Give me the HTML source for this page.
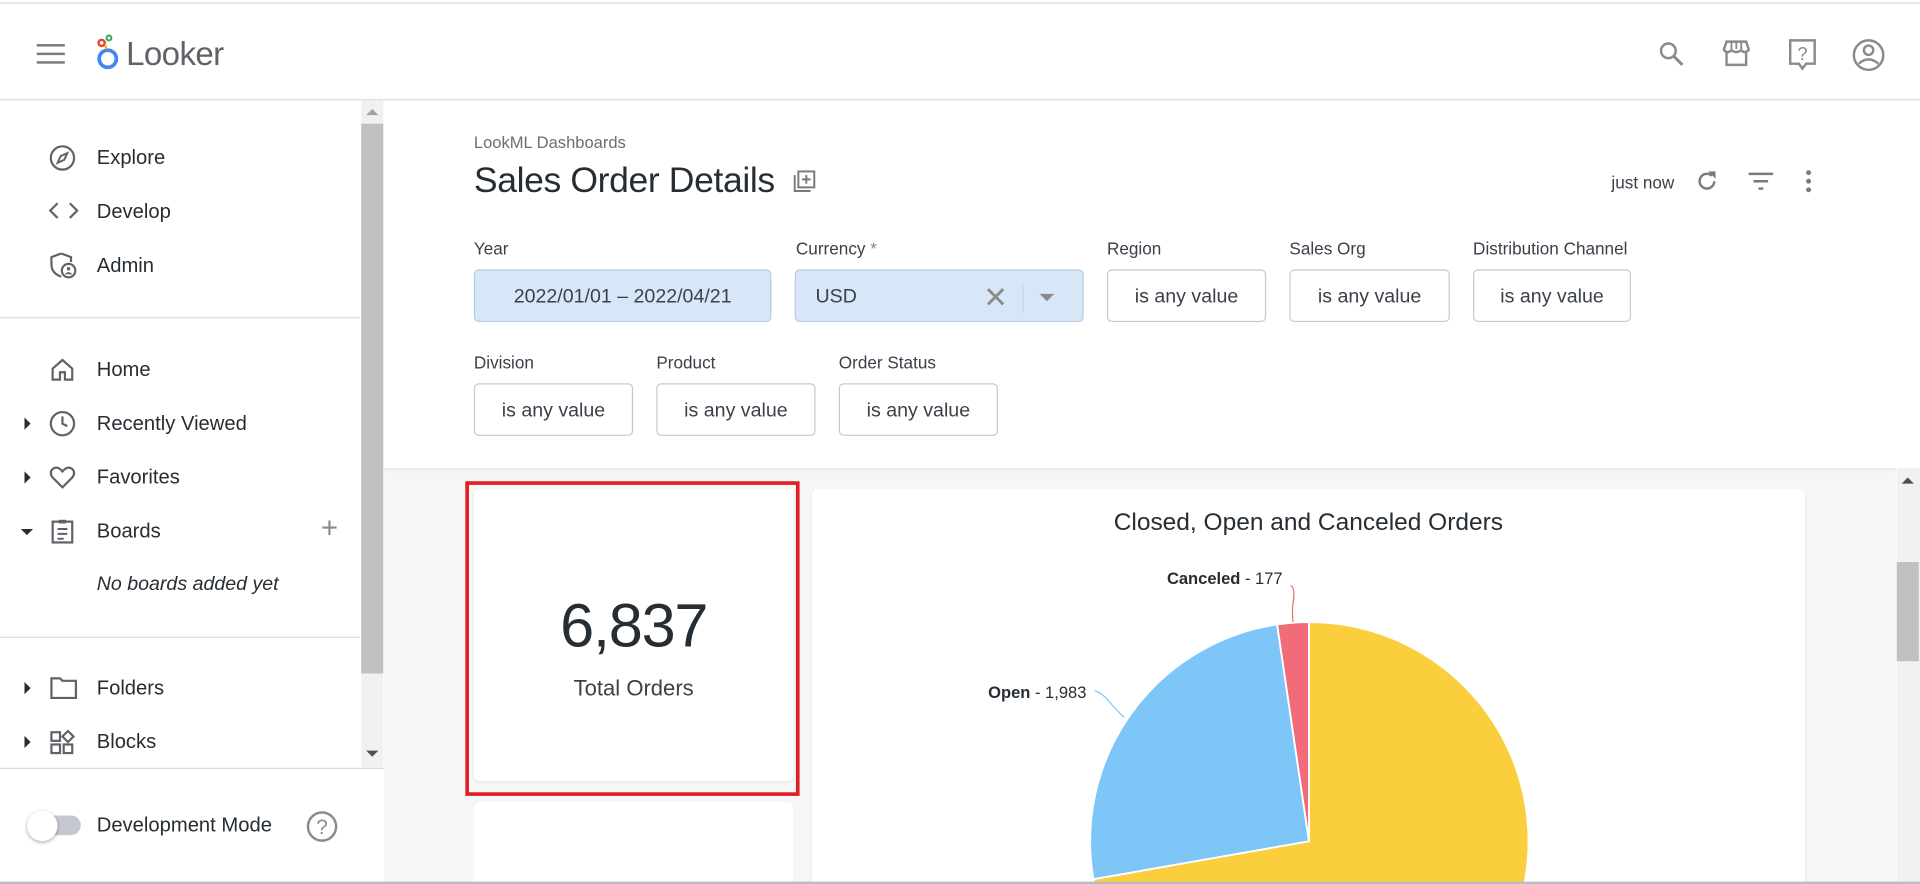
<!DOCTYPE html>
<html><head><meta charset="utf-8"><style>
html,body{margin:0;padding:0;width:1920px;height:884px;overflow:hidden;background:#fff;font-family:"Liberation Sans",sans-serif;}
#w{position:absolute;left:0;top:0;width:1568px;height:722px;overflow:hidden;transform:scale(1.22449);transform-origin:0 0;color:#262d33;}
.a{position:absolute;}
.nav{position:absolute;left:79px;font-size:16.5px;color:#262d33;margin-top:1px;}
.ic{position:absolute;left:40px;}
.lbl{position:absolute;font-size:14px;color:#3a4149;}
.box{position:absolute;top:0;height:43px;border:1px solid #c8c8c8;border-radius:4px;box-sizing:border-box;font-size:16px;color:#3a4149;display:flex;align-items:center;justify-content:center;background:#fff;padding-top:2px;}
.blue{background:#d8e7f8;border-color:#b8cbe0;}
.tri{position:absolute;left:20px;width:0;height:0;border-top:5px solid transparent;border-bottom:5px solid transparent;border-left:5px solid #262d33;}
</style></head><body><div id="w">
<div class="a" style="left:0;top:2px;width:1568px;height:1px;background:#ddd"></div>
<div class="a" style="left:0;top:81px;width:1568px;height:1px;background:#dcdcdc"></div>
<div class="a" style="left:30px;top:36px;width:23px;height:2px;background:#7a7a7a;box-shadow:0 7px 0 #7a7a7a,0 14px 0 #7a7a7a;"></div>
<svg class="a" style="left:77px;top:27px" width="22" height="32" viewBox="0 0 22 32"><circle cx="11" cy="21" r="7" fill="none" stroke="#4285f4" stroke-width="3"/><circle cx="6" cy="8" r="2.5" fill="none" stroke="#ea4335" stroke-width="2"/><circle cx="12" cy="4" r="2" fill="none" stroke="#34a853" stroke-width="1.6"/><path d="M9 10 L10 13" stroke="#fbbc04" stroke-width="2"/></svg>
<div class="a" style="left:103px;top:29px;font-size:27px;color:#5f6368;letter-spacing:-0.5px">Looker</div>
<svg class="a" style="left:1353px;top:32px" width="24" height="24" viewBox="0 0 24 24"><circle cx="9.5" cy="9.5" r="6" fill="none" stroke="#8a8a8a" stroke-width="2"/><path d="M14 14l7 7" stroke="#8a8a8a" stroke-width="2.4"/></svg>
<svg class="a" style="left:1405px;top:31px" width="26" height="26" viewBox="0 0 26 26"><path d="M3 9 L5 3 H21 L23 9 V10 Q20 13 17 10 Q13 13 9 10 Q6 13 3 10Z M5 12 V22 H21 V12" fill="none" stroke="#8a8a8a" stroke-width="2"/><path d="M9 3 V9 M13 3 V9 M17 3 V9" stroke="#8a8a8a" stroke-width="1.5"/></svg>
<svg class="a" style="left:1459px;top:31px" width="26" height="28" viewBox="0 0 26 28"><path d="M3 2 H23 V21 H16 L13 25 L10 21 H3Z" fill="none" stroke="#8a8a8a" stroke-width="2"/><text x="13" y="18" font-size="15" text-anchor="middle" fill="#8a8a8a" font-family="Liberation Sans">?</text></svg>
<svg class="a" style="left:1512px;top:31px" width="28" height="28" viewBox="0 0 28 28"><circle cx="14" cy="14" r="12" fill="none" stroke="#8a8a8a" stroke-width="2"/><circle cx="14" cy="10" r="3.8" fill="none" stroke="#8a8a8a" stroke-width="2"/><path d="M6 21 Q14 14 22 21" fill="none" stroke="#8a8a8a" stroke-width="2"/></svg>
<div class="a" style="left:295px;top:82px;width:18px;height:545px;background:#f1f1f1"></div>
<div class="a" style="left:295px;top:101px;width:18px;height:449px;background:#c1c1c1"></div>
<div class="a" style="left:299px;top:89px;border-left:5px solid transparent;border-right:5px solid transparent;border-bottom:5px solid #a3a3a3"></div>
<div class="a" style="left:299px;top:613px;border-left:5px solid transparent;border-right:5px solid transparent;border-top:5px solid #505050"></div>
<svg class="ic" style="top:118px" width="22" height="22" viewBox="0 0 22 22"><circle cx="11" cy="11" r="9.5" fill="none" stroke="#5f6368" stroke-width="1.8"/><path d="M15 7 L12.5 12.5 L7 15 L9.5 9.5Z" fill="none" stroke="#5f6368" stroke-width="1.6"/></svg>
<div class="nav" style="top:119px">Explore</div>
<svg class="ic" style="top:164px" width="24" height="16" viewBox="0 0 24 16"><path d="M7 2 L1 8 L7 14 M17 2 L23 8 L17 14" fill="none" stroke="#5f6368" stroke-width="1.8"/></svg>
<div class="nav" style="top:163px">Develop</div>
<svg class="ic" style="top:205px" width="24" height="24" viewBox="0 0 24 24"><path d="M10 2 L18 5 V9 M10 2 L2 5 V11 Q2 18 10 21" fill="none" stroke="#5f6368" stroke-width="1.8"/><circle cx="16" cy="16" r="5.5" fill="none" stroke="#5f6368" stroke-width="1.8"/><circle cx="16" cy="14.5" r="1.4" fill="#5f6368"/><path d="M13.5 19 Q16 16.5 18.5 19" fill="#5f6368" stroke="#5f6368"/></svg>
<div class="nav" style="top:207px">Admin</div>
<div class="a" style="left:0;top:259px;width:294px;height:1px;background:#dcdcdc"></div>
<svg class="ic" style="top:291px" width="22" height="22" viewBox="0 0 22 22"><path d="M3 10 L11 3 L19 10 V19 H13 V13 H9 V19 H3Z" fill="none" stroke="#5f6368" stroke-width="1.8"/></svg>
<div class="nav" style="top:292px">Home</div>
<div class="tri" style="top:341px"></div>
<svg class="ic" style="top:335px" width="22" height="22" viewBox="0 0 22 22"><circle cx="11" cy="11" r="9.5" fill="none" stroke="#5f6368" stroke-width="1.8"/><path d="M11 5 V11 L15 13" fill="none" stroke="#5f6368" stroke-width="1.8"/></svg>
<div class="nav" style="top:336px">Recently Viewed</div>
<div class="tri" style="top:385px"></div>
<svg class="ic" style="top:380px" width="22" height="20" viewBox="0 0 22 20"><path d="M11 18 L3 10 Q0 6 3 3 Q7 0 11 5 Q15 0 19 3 Q22 6 19 10Z" fill="none" stroke="#5f6368" stroke-width="1.8"/></svg>
<div class="nav" style="top:380px">Favorites</div>
<div class="a" style="left:17px;top:432px;border-left:5px solid transparent;border-right:5px solid transparent;border-top:5px solid #262d33"></div>
<svg class="ic" style="top:423px" width="22" height="22" viewBox="0 0 22 22"><rect x="3" y="3" width="16" height="17" fill="none" stroke="#5f6368" stroke-width="1.8"/><rect x="8" y="1.5" width="6" height="3" fill="#5f6368"/><path d="M7 9 H15 M7 13 H15 M7 17 H12" stroke="#5f6368" stroke-width="1.6"/></svg>
<div class="nav" style="top:424px">Boards</div>
<div class="a" style="left:262px;top:418px;font-size:24px;color:#8a8a8a;font-weight:300">+</div>
<div class="nav" style="top:468px;font-style:italic;font-size:16px">No boards added yet</div>
<div class="a" style="left:0;top:520px;width:294px;height:1px;background:#dcdcdc"></div>
<div class="tri" style="top:557px"></div>
<svg class="ic" style="top:552px" width="24" height="20" viewBox="0 0 24 20"><path d="M2 2 H9 L11 4 H22 V18 H2Z" fill="none" stroke="#5f6368" stroke-width="1.8"/></svg>
<div class="nav" style="top:552px">Folders</div>
<div class="tri" style="top:601px"></div>
<svg class="ic" style="top:596px" width="24" height="22" viewBox="0 0 24 22"><rect x="2" y="2" width="7" height="7" fill="none" stroke="#5f6368" stroke-width="1.8"/><rect x="2" y="12" width="7" height="7" fill="none" stroke="#5f6368" stroke-width="1.8"/><rect x="12" y="12" width="7" height="7" fill="none" stroke="#5f6368" stroke-width="1.8"/><path d="M15.5 1 L20 5.5 L15.5 10 L11 5.5Z" fill="none" stroke="#5f6368" stroke-width="1.8"/></svg>
<div class="nav" style="top:596px">Blocks</div>
<div class="a" style="left:0;top:627px;width:314px;height:1px;background:#dcdcdc"></div>
<div class="a" style="left:24px;top:666px;width:42px;height:16px;border-radius:8px;background:#c4c8ce"></div>
<div class="a" style="left:22px;top:662px;width:25px;height:25px;border-radius:50%;background:#fff;box-shadow:0 1px 3px rgba(0,0,0,.35)"></div>
<div class="nav" style="top:664px">Development Mode</div>
<svg class="a" style="left:250px;top:662px" width="26" height="26" viewBox="0 0 26 26"><circle cx="13" cy="13" r="11.5" fill="none" stroke="#8a8a8a" stroke-width="2"/><text x="13" y="19" font-size="17" text-anchor="middle" fill="#8a8a8a" font-family="Liberation Sans">?</text></svg>
<div class="a" style="left:387px;top:109px;font-size:13.5px;color:#6a6f75">LookML Dashboards</div>
<div class="a" style="left:387px;top:132px;font-size:29px;color:#262d33;letter-spacing:-0.3px">Sales Order Details</div>
<svg class="a" style="left:647px;top:138px" width="20" height="20" viewBox="0 0 20 20"><rect x="5" y="2" width="13" height="13" fill="none" stroke="#7a7a7a" stroke-width="1.6"/><path d="M2 5 V18 H15" fill="none" stroke="#7a7a7a" stroke-width="1.6"/><path d="M11.5 5 V12 M8 8.5 H15" stroke="#7a7a7a" stroke-width="1.6"/></svg>
<div class="a" style="left:1316px;top:141px;font-size:14px;color:#3a4149">just now</div>
<svg class="a" style="left:1384px;top:138px" width="20" height="20" viewBox="0 0 20 20"><path d="M16 10 A6 6 0 1 1 14 5.5" fill="none" stroke="#7a7a7a" stroke-width="2"/><path d="M11 2 H17 V8Z" fill="#7a7a7a"/></svg>
<svg class="a" style="left:1427px;top:140px" width="22" height="16" viewBox="0 0 22 16"><path d="M1 2 H21 M5 8 H17 M9 14 H13" stroke="#7a7a7a" stroke-width="2"/></svg>
<svg class="a" style="left:1473px;top:138px" width="8" height="20" viewBox="0 0 8 20"><circle cx="4" cy="3" r="2" fill="#7a7a7a"/><circle cx="4" cy="10" r="2" fill="#7a7a7a"/><circle cx="4" cy="17" r="2" fill="#7a7a7a"/></svg>
<div class="lbl" style="left:387px;top:195px">Year</div>
<div class="lbl" style="left:650px;top:195px">Currency <span style="color:#888">*</span></div>
<div class="lbl" style="left:904px;top:195px">Region</div>
<div class="lbl" style="left:1053px;top:195px">Sales Org</div>
<div class="lbl" style="left:1203px;top:195px">Distribution Channel</div>
<div class="a" style="left:0;top:220px;width:1568px;height:44px">
<div class="box blue" style="left:387px;width:243px">2022/01/01 – 2022/04/21</div>
<div class="box blue" style="left:649px;width:236px;justify-content:flex-start;padding-left:16px">USD<span style="position:absolute;left:153px;top:8px;font-size:24px;color:#8a8a8a;font-weight:300">✕</span><span style="position:absolute;left:185px;top:10px;width:1px;height:24px;background:#c9d6e4"></span><span style="position:absolute;left:199px;top:19px;border-left:6px solid transparent;border-right:6px solid transparent;border-top:6px solid #8a8a8a"></span></div>
<div class="box" style="left:904px;width:130px">is any value</div>
<div class="box" style="left:1053px;width:131px">is any value</div>
<div class="box" style="left:1203px;width:129px">is any value</div>
</div>
<div class="lbl" style="left:387px;top:288px">Division</div>
<div class="lbl" style="left:536px;top:288px">Product</div>
<div class="lbl" style="left:685px;top:288px">Order Status</div>
<div class="a" style="left:0;top:313px;width:1568px;height:44px">
<div class="box" style="left:387px;width:130px">is any value</div>
<div class="box" style="left:536px;width:130px">is any value</div>
<div class="box" style="left:685px;width:130px">is any value</div>
</div>
<div class="a" style="left:314px;top:382px;width:1234px;height:340px;background:#f6f6f6;box-shadow:inset 0 3px 4px -2px rgba(0,0,0,.08)"></div>
<div class="a" style="left:1549px;top:382px;width:19px;height:340px;background:#f1f1f1"></div>
<div class="a" style="left:1549px;top:459px;width:18px;height:81px;background:#c1c1c1"></div>
<div class="a" style="left:1553px;top:390px;border-left:5px solid transparent;border-right:5px solid transparent;border-bottom:5px solid #505050"></div>
<div class="a" style="left:387px;top:399px;width:261px;height:239px;background:#fff;border-radius:5px;box-shadow:0 1px 2px rgba(0,0,0,.08)"></div>
<div class="a" style="left:387px;top:482px;width:261px;text-align:center;font-size:50px;color:#262d33;letter-spacing:-1px">6,837</div>
<div class="a" style="left:387px;top:552px;width:261px;text-align:center;font-size:18px;color:#3a4149">Total Orders</div>
<div class="a" style="left:380px;top:393px;width:267px;height:251px;border:3px solid #e01f26"></div>
<div class="a" style="left:387px;top:655px;width:261px;height:70px;background:#fff;border-radius:5px"></div>
<div class="a" style="left:663px;top:399px;width:811px;height:330px;background:#fff;border-radius:5px;box-shadow:0 1px 2px rgba(0,0,0,.08)"></div>
<div class="a" style="left:663px;top:416px;width:811px;text-align:center;font-size:20px;color:#262d33">Closed, Open and Canceled Orders</div>
<svg class="a" style="left:663px;top:399px" width="811" height="323" viewBox="663 399 811 323">
<path d="M1069 687 L1069 508 A179 179 0 1 1 893 718 Z" fill="#fbce3d" stroke="#fff" stroke-width="1.5"/>
<path d="M1069 687 L893 718 A179 179 0 0 1 1043 510 Z" fill="#7ec6f8" stroke="#fff" stroke-width="1.5"/>
<path d="M1069 687 L1043 510 A179 179 0 0 1 1069 508 Z" fill="#f26b78" stroke="#fff" stroke-width="1.5"/>
<path d="M1054 478 Q1058 480 1056 492 Q1055 500 1056 508" fill="none" stroke="#f26b78" stroke-width="1"/>
<path d="M894 564 Q900 566 905 572 Q910 578 918 586" fill="none" stroke="#7ec6f8" stroke-width="1"/>
<text x="953" y="477" font-size="13.5" fill="#262d33" font-family="Liberation Sans"><tspan font-weight="bold">Canceled</tspan> - 177</text>
<text x="807" y="570" font-size="13.5" fill="#262d33" font-family="Liberation Sans"><tspan font-weight="bold">Open</tspan> - 1,983</text>
</svg>
<div class="a" style="left:0;top:720px;width:1568px;height:2px;background:#b8bcc4"></div>
</div></body></html>
